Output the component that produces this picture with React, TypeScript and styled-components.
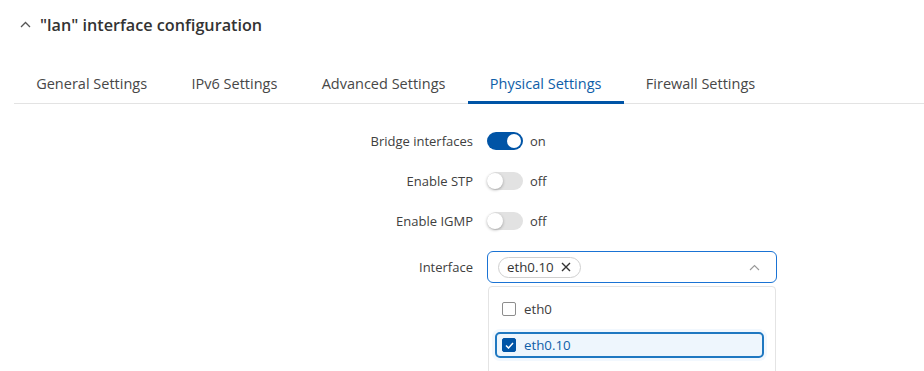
import React from "react";
import styled, { createGlobalStyle } from "styled-components";

const Global = createGlobalStyle`
  html, body { margin: 0; padding: 0; background: #fff; }
  body { font-family: "Open Sans", "Noto Sans", sans-serif; color: #404040; }
`;

const Page = styled.div`
  width: 924px;
  height: 371px;
  overflow: hidden;
  position: relative;
`;

const Header = styled.div`
  display: flex;
  align-items: center;
  gap: 9px;
  height: 48px;
  padding-left: 20px;
  padding-top: 1px;
  box-sizing: border-box;
`;

const HeaderTitle = styled.h2`
  margin: 0;
  font-size: 16.2px;
  font-weight: 600;
  color: #333;
`;

const Tabs = styled.div`
  display: flex;
  margin: 15px 0 0 14px;
  border-bottom: 1px solid #e3e3e3;
`;

const Tab = styled.div<{ $active?: boolean }>`
  padding: 0 22.2px;
  height: 40px;
  display: flex;
  align-items: center;
  font-size: 14.5px;
  color: ${(p) => (p.$active ? "#0f5ea8" : "#474747")};
  position: relative;
  box-sizing: border-box;
  &::after {
    content: "";
    position: absolute;
    left: 0;
    right: 0;
    bottom: -1px;
    height: 3px;
    background: ${(p) => (p.$active ? "#0054a6" : "transparent")};
  }
`;

const Form = styled.div`
  display: grid;
  grid-template-columns: 473px 290px;
  column-gap: 14px;
  row-gap: 20px;
  padding-top: 27px;
  align-items: center;
`;

const Label = styled.div`
  text-align: right;
  font-size: 13px;
  color: #404040;
  line-height: 20px;
`;

const Control = styled.div`
  display: flex;
  align-items: center;
  gap: 7px;
  font-size: 13px;
  height: 20px;
  position: relative;
`;

const Switch = styled.div<{ $on?: boolean }>`
  width: 36px;
  height: 18px;
  border-radius: 9px;
  background: ${(p) => (p.$on ? "#0054a6" : "#e2e2e2")};
  position: relative;
  flex: none;
  &::after {
    content: "";
    position: absolute;
    top: ${(p) => (p.$on ? "2px" : "1px")};
    left: ${(p) => (p.$on ? "20px" : "0px")};
    width: ${(p) => (p.$on ? "14px" : "16px")};
    height: ${(p) => (p.$on ? "14px" : "16px")};
    border-radius: 50%;
    background: #fff;
    box-shadow: ${(p) => (p.$on ? "none" : "0 1px 3px rgba(0,0,0,0.3)")};
  }
`;

const StateText = styled.span`
  color: #404040;
  font-size: 13px;
`;

const SelectWrap = styled.div`
  position: relative;
  width: 290px;
`;

const SelectBox = styled.div`
  box-sizing: border-box;
  height: 32px;
  border: 1px solid #1a73d4;
  border-radius: 6px;
  display: flex;
  align-items: center;
  justify-content: space-between;
  padding: 0 16px 0 10px;
`;

const Chip = styled.div`
  display: flex;
  align-items: center;
  gap: 7px;
  height: 21px;
  box-sizing: border-box;
  border: 1px solid #cfcfcf;
  border-radius: 11px;
  padding: 0 9px 0 8px;
  font-size: 13.3px;
  color: #333;
`;

const Menu = styled.div`
  position: absolute;
  top: 35px;
  left: 1px;
  width: 288px;
  box-sizing: border-box;
  height: 100px;
  border: 1px solid #e4e4e4;
  border-radius: 4px;
  background: #fff;
  padding: 9px 11px 0 6px;
  display: flex;
  flex-direction: column;
  gap: 10px;
`;

const Item = styled.div<{ $selected?: boolean }>`
  box-sizing: border-box;
  height: 26px;
  display: flex;
  align-items: center;
  gap: 8px;
  padding-left: 5px;
  border-radius: 5px;
  border: 2px solid ${(p) => (p.$selected ? "#1f78c1" : "transparent")};
  background: ${(p) => (p.$selected ? "#eef6fd" : "transparent")};
  box-shadow: ${(p) => (p.$selected ? "0 0 0 3px #f2f8fe" : "none")};
  font-size: 13.3px;
  color: ${(p) => (p.$selected ? "#0f5ea8" : "#404040")};
`;

const Check = styled.div<{ $checked?: boolean }>`
  width: 14px;
  height: 14px;
  box-sizing: border-box;
  border-radius: 2px;
  border: 1px solid ${(p) => (p.$checked ? "#0054a6" : "#8d8d8d")};
  background: ${(p) => (p.$checked ? "#0054a6" : "#fff")};
  display: flex;
  align-items: center;
  justify-content: center;
`;

export default function App() {
  return (
    <Page>
      <Global />
      <Header>
        <svg width="11" height="7" viewBox="0 0 11 7">
          <path d="M1 6 L5.5 1.5 L10 6" fill="none" stroke="#555" strokeWidth="1.3" />
        </svg>
        <HeaderTitle>"lan" interface configuration</HeaderTitle>
      </Header>
      <Tabs>
        <Tab>General Settings</Tab>
        <Tab>IPv6 Settings</Tab>
        <Tab>Advanced Settings</Tab>
        <Tab $active>Physical Settings</Tab>
        <Tab>Firewall Settings</Tab>
      </Tabs>
      <Form>
        <Label>Bridge interfaces</Label>
        <Control>
          <Switch $on />
          <StateText>on</StateText>
        </Control>
        <Label>Enable STP</Label>
        <Control>
          <Switch />
          <StateText>off</StateText>
        </Control>
        <Label>Enable IGMP</Label>
        <Control>
          <Switch />
          <StateText>off</StateText>
        </Control>
        <Label>Interface</Label>
        <SelectWrap>
          <SelectBox>
            <Chip>
              eth0.10
              <svg width="10" height="10" viewBox="0 0 10 10">
                <path d="M1 1 L9 9 M9 1 L1 9" stroke="#333" strokeWidth="1.4" />
              </svg>
            </Chip>
            <svg width="11" height="7" viewBox="0 0 11 7">
              <path d="M1 6 L5.5 1.5 L10 6" fill="none" stroke="#999" strokeWidth="1.1" />
            </svg>
          </SelectBox>
          <Menu>
            <Item>
              <Check />
              eth0
            </Item>
            <Item $selected>
              <Check $checked>
                <svg width="9" height="7" viewBox="0 0 9 7">
                  <path d="M1 3.5 L3.5 6 L8 1" fill="none" stroke="#fff" strokeWidth="1.5" />
                </svg>
              </Check>
              eth0.10
            </Item>
          </Menu>
        </SelectWrap>
      </Form>
    </Page>
  );
}
